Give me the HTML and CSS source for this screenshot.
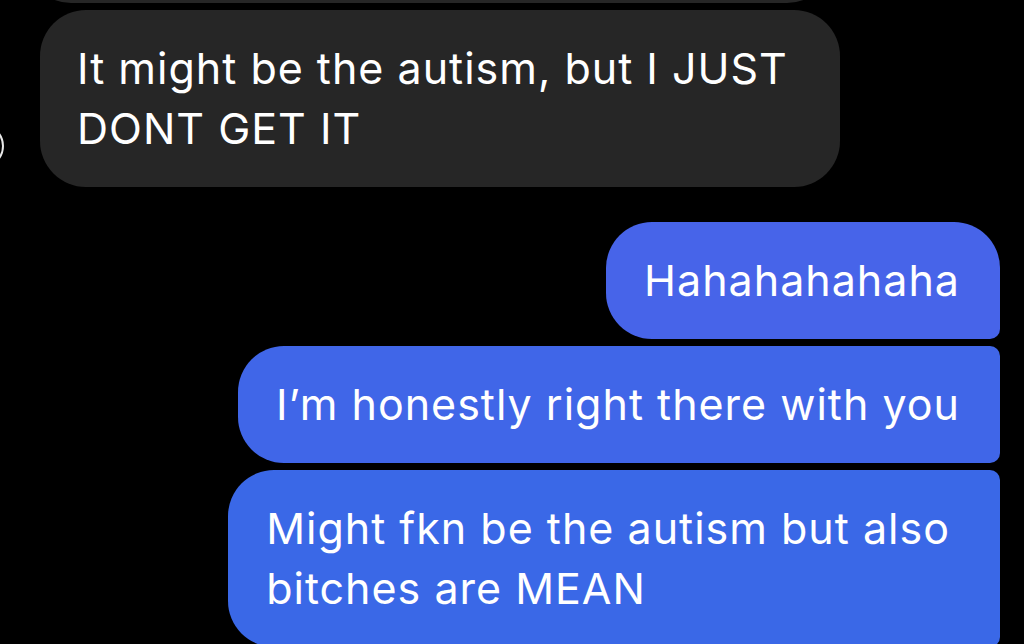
FILE: index.html
```html
<!DOCTYPE html>
<html lang="en">
<head>
    <meta charset="UTF-8">
    <meta name="viewport" content="width=device-width, initial-scale=1.0">
    <title>Chat</title>
    <link rel="stylesheet" href="styles.css">
</head>
<body>
    <div class="thread">
        <div class="row received">
            <div class="bubble gray prev"></div>
        </div>
        <div class="row received">
            <div class="avatar"></div>
            <div class="bubble gray last">It might be the autism, but I JUST<br>DONT GET IT</div>
        </div>

        <div class="row sent first-sent">
            <div class="bubble blue top">Hahahahahaha</div>
        </div>
        <div class="row sent">
            <div class="bubble blue middle">I’m honestly right there with you</div>
        </div>
        <div class="row sent">
            <div class="bubble blue bottom">Might fkn be the autism but also<br>bitches are MEAN</div>
        </div>
    </div>
</body>
</html>
```

FILE: styles.css
```css
body {
    margin: 0;
    padding: 0;
    background-color: #000;
    font-family: Inter, Roboto, "Liberation Sans", Arial, sans-serif;
    overflow: hidden;
}
.thread {
    display: flex;
    flex-direction: column;
    gap: 7px;
    padding-right: 24px;
}
.row {
    display: flex;
}
.received {
    justify-content: flex-start;
}
.sent {
    justify-content: flex-end;
}
.bubble {
    color: #fff;
    font-size: 43px;
    letter-spacing: 1px;
    line-height: 60px;
    padding: 28px 40px 29px 38px;
    border-radius: 46px;
}
.gray {
    background-color: #262626;
}
.prev {
    width: 730px;
    height: 60px;
    margin-left: 25px;
    margin-top: -114px;
}
.avatar {
    width: 40px;
    height: 40px;
    border-radius: 50%;
    border: 2px solid #e8e8e8;
    margin-left: -40px;
    margin-top: 114px;
    margin-right: 36px;
    flex-shrink: 0;
}
.last {
    padding-left: 37px;
    padding-right: 52px;
}
.first-sent {
    margin-top: 28px;
}
.blue {
    background-color: #4664e8;
}
.top {
    border-bottom-right-radius: 10px;
    background-color: #4764e9;
}
.middle {
    border-top-right-radius: 10px;
    border-bottom-right-radius: 10px;
    background-color: #4066e8;
}
.bottom {
    padding-right: 50px;
    border-top-right-radius: 10px;
    border-bottom-right-radius: 10px;
    background-color: #3a68e7;
}
```
